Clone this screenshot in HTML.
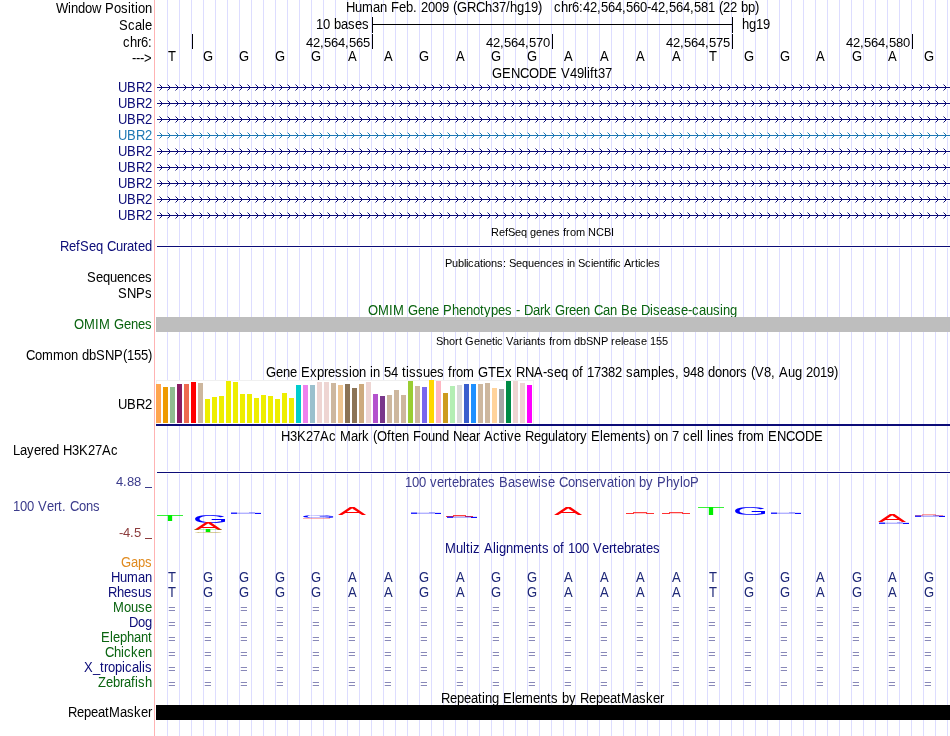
<!DOCTYPE html>
<html><head><meta charset="utf-8"><style>
html,body{margin:0;padding:0;background:#fff;}
svg{display:block;will-change:transform;font-family:"Liberation Sans",sans-serif;}
</style></head><body>
<svg width="950" height="736" viewBox="0 0 950 736" shape-rendering="crispEdges">
<defs><pattern id="arrN" x="157" y="0" width="8" height="7" patternUnits="userSpaceOnUse"><rect x="0" y="3" width="8" height="1" fill="#0C0C78"/><rect x="4" y="2" width="1" height="3" fill="#0C0C78"/><rect x="3" y="1" width="1" height="1" fill="#0C0C78"/><rect x="3" y="5" width="1" height="1" fill="#0C0C78"/><rect x="2" y="0" width="1" height="1" fill="#8585BB"/><rect x="2" y="6" width="1" height="1" fill="#8585BB"/></pattern><pattern id="arrT" x="157" y="0" width="8" height="7" patternUnits="userSpaceOnUse"><rect x="0" y="3" width="8" height="1" fill="#1E78B4"/><rect x="4" y="2" width="1" height="3" fill="#1E78B4"/><rect x="3" y="1" width="1" height="1" fill="#1E78B4"/><rect x="3" y="5" width="1" height="1" fill="#1E78B4"/><rect x="2" y="0" width="1" height="1" fill="#8FBBDA"/><rect x="2" y="6" width="1" height="1" fill="#8FBBDA"/></pattern></defs>
<rect x="0" y="0" width="950" height="736" fill="#fff"/>
<rect x="167" y="0" width="1" height="736" fill="#DDDDFF"/>
<rect x="179" y="0" width="1" height="736" fill="#DDDDFF"/>
<rect x="191" y="0" width="1" height="736" fill="#DDDDFF"/>
<rect x="203" y="0" width="1" height="736" fill="#DDDDFF"/>
<rect x="215" y="0" width="1" height="736" fill="#DDDDFF"/>
<rect x="227" y="0" width="1" height="736" fill="#DDDDFF"/>
<rect x="239" y="0" width="1" height="736" fill="#DDDDFF"/>
<rect x="251" y="0" width="1" height="736" fill="#DDDDFF"/>
<rect x="263" y="0" width="1" height="736" fill="#DDDDFF"/>
<rect x="275" y="0" width="1" height="736" fill="#DDDDFF"/>
<rect x="287" y="0" width="1" height="736" fill="#DDDDFF"/>
<rect x="299" y="0" width="1" height="736" fill="#DDDDFF"/>
<rect x="311" y="0" width="1" height="736" fill="#DDDDFF"/>
<rect x="323" y="0" width="1" height="736" fill="#DDDDFF"/>
<rect x="335" y="0" width="1" height="736" fill="#DDDDFF"/>
<rect x="347" y="0" width="1" height="736" fill="#DDDDFF"/>
<rect x="359" y="0" width="1" height="736" fill="#DDDDFF"/>
<rect x="371" y="0" width="1" height="736" fill="#DDDDFF"/>
<rect x="383" y="0" width="1" height="736" fill="#DDDDFF"/>
<rect x="395" y="0" width="1" height="736" fill="#DDDDFF"/>
<rect x="407" y="0" width="1" height="736" fill="#DDDDFF"/>
<rect x="419" y="0" width="1" height="736" fill="#DDDDFF"/>
<rect x="431" y="0" width="1" height="736" fill="#DDDDFF"/>
<rect x="443" y="0" width="1" height="736" fill="#DDDDFF"/>
<rect x="455" y="0" width="1" height="736" fill="#DDDDFF"/>
<rect x="467" y="0" width="1" height="736" fill="#DDDDFF"/>
<rect x="479" y="0" width="1" height="736" fill="#DDDDFF"/>
<rect x="491" y="0" width="1" height="736" fill="#DDDDFF"/>
<rect x="503" y="0" width="1" height="736" fill="#DDDDFF"/>
<rect x="515" y="0" width="1" height="736" fill="#DDDDFF"/>
<rect x="527" y="0" width="1" height="736" fill="#DDDDFF"/>
<rect x="539" y="0" width="1" height="736" fill="#DDDDFF"/>
<rect x="551" y="0" width="1" height="736" fill="#DDDDFF"/>
<rect x="563" y="0" width="1" height="736" fill="#DDDDFF"/>
<rect x="575" y="0" width="1" height="736" fill="#DDDDFF"/>
<rect x="587" y="0" width="1" height="736" fill="#DDDDFF"/>
<rect x="599" y="0" width="1" height="736" fill="#DDDDFF"/>
<rect x="611" y="0" width="1" height="736" fill="#DDDDFF"/>
<rect x="623" y="0" width="1" height="736" fill="#DDDDFF"/>
<rect x="635" y="0" width="1" height="736" fill="#DDDDFF"/>
<rect x="647" y="0" width="1" height="736" fill="#DDDDFF"/>
<rect x="659" y="0" width="1" height="736" fill="#DDDDFF"/>
<rect x="671" y="0" width="1" height="736" fill="#DDDDFF"/>
<rect x="683" y="0" width="1" height="736" fill="#DDDDFF"/>
<rect x="695" y="0" width="1" height="736" fill="#DDDDFF"/>
<rect x="707" y="0" width="1" height="736" fill="#DDDDFF"/>
<rect x="719" y="0" width="1" height="736" fill="#DDDDFF"/>
<rect x="731" y="0" width="1" height="736" fill="#DDDDFF"/>
<rect x="743" y="0" width="1" height="736" fill="#DDDDFF"/>
<rect x="755" y="0" width="1" height="736" fill="#DDDDFF"/>
<rect x="767" y="0" width="1" height="736" fill="#DDDDFF"/>
<rect x="779" y="0" width="1" height="736" fill="#DDDDFF"/>
<rect x="791" y="0" width="1" height="736" fill="#DDDDFF"/>
<rect x="803" y="0" width="1" height="736" fill="#DDDDFF"/>
<rect x="815" y="0" width="1" height="736" fill="#DDDDFF"/>
<rect x="827" y="0" width="1" height="736" fill="#DDDDFF"/>
<rect x="839" y="0" width="1" height="736" fill="#DDDDFF"/>
<rect x="851" y="0" width="1" height="736" fill="#DDDDFF"/>
<rect x="863" y="0" width="1" height="736" fill="#DDDDFF"/>
<rect x="875" y="0" width="1" height="736" fill="#DDDDFF"/>
<rect x="887" y="0" width="1" height="736" fill="#DDDDFF"/>
<rect x="899" y="0" width="1" height="736" fill="#DDDDFF"/>
<rect x="911" y="0" width="1" height="736" fill="#DDDDFF"/>
<rect x="923" y="0" width="1" height="736" fill="#DDDDFF"/>
<rect x="935" y="0" width="1" height="736" fill="#DDDDFF"/>
<rect x="947" y="0" width="1" height="736" fill="#DDDDFF"/>
<rect x="154" y="0" width="1" height="736" fill="#FFB3B3"/>
<text x="56 68 71 78 85 92 101 105 114 121 128 131 135 138 145" y="0" transform="translate(0,13) scale(1,1.06)" fill="#000" font-size="13">Window Position</text>
<text x="119 128 135 142 145" y="0" transform="translate(0,30) scale(1,1.06)" fill="#000" font-size="13">Scale</text>
<text x="123 130 137 141 148" y="0" transform="translate(0,47) scale(1,1.06)" fill="#000" font-size="13">chr6:</text>
<text x="132 136 140 144" y="0" transform="translate(0,63) scale(1,1.06)" fill="#000" font-size="13">---&gt;</text>
<text x="118 127 136 145" y="0" transform="translate(0,92) scale(1,1.06)" fill="#0C0C78" font-size="13">UBR2</text>
<text x="118 127 136 145" y="0" transform="translate(0,108) scale(1,1.06)" fill="#0C0C78" font-size="13">UBR2</text>
<text x="118 127 136 145" y="0" transform="translate(0,124) scale(1,1.06)" fill="#0C0C78" font-size="13">UBR2</text>
<text x="118 127 136 145" y="0" transform="translate(0,140) scale(1,1.06)" fill="#1E78B4" font-size="13">UBR2</text>
<text x="118 127 136 145" y="0" transform="translate(0,156) scale(1,1.06)" fill="#0C0C78" font-size="13">UBR2</text>
<text x="118 127 136 145" y="0" transform="translate(0,172) scale(1,1.06)" fill="#0C0C78" font-size="13">UBR2</text>
<text x="118 127 136 145" y="0" transform="translate(0,188) scale(1,1.06)" fill="#0C0C78" font-size="13">UBR2</text>
<text x="118 127 136 145" y="0" transform="translate(0,204) scale(1,1.06)" fill="#0C0C78" font-size="13">UBR2</text>
<text x="118 127 136 145" y="0" transform="translate(0,220) scale(1,1.06)" fill="#0C0C78" font-size="13">UBR2</text>
<text x="60 69 76 80 89 96 103 107 116 123 127 134 138 145" y="0" transform="translate(0,251) scale(1,1.06)" fill="#0C0C78" font-size="13">RefSeq Curated</text>
<text x="87 96 103 110 117 124 131 138 145" y="0" transform="translate(0,282) scale(1,1.06)" fill="#000" font-size="13">Sequences</text>
<text x="118 127 136 145" y="0" transform="translate(0,298) scale(1,1.06)" fill="#000" font-size="13">SNPs</text>
<text x="74 84 95 99 110 114 124 131 138 145" y="0" transform="translate(0,329) scale(1,1.06)" fill="#0A6410" font-size="13">OMIM Genes</text>
<text x="26 35 42 53 64 71 78 82 89 96 105 114 123 127 134 141 148" y="0" transform="translate(0,360) scale(1,1.06)" fill="#000" font-size="13">Common dbSNP(155)</text>
<text x="118 127 136 145" y="0" transform="translate(0,409) scale(1,1.06)" fill="#000" font-size="13">UBR2</text>
<text x="116 123 127 134 141" y="486" fill="#3C3C8C" font-size="13">4.88 </text>
<text x="119 123 130 134 141" y="537" fill="#8C3C3C" font-size="13">-4.5 </text>
<text x="121 131 138 145" y="0" transform="translate(0,567) scale(1,1.06)" fill="#E08A1E" font-size="13">Gaps</text>
<text x="111 120 127 138 145" y="0" transform="translate(0,582) scale(1,1.06)" fill="#0C0C78" font-size="13">Human</text>
<text x="108 117 124 131 138 145" y="0" transform="translate(0,597) scale(1,1.06)" fill="#0C0C78" font-size="13">Rhesus</text>
<text x="113 124 131 138 145" y="0" transform="translate(0,612) scale(1,1.06)" fill="#0A6410" font-size="13">Mouse</text>
<text x="129 138 145" y="0" transform="translate(0,627) scale(1,1.06)" fill="#0C0C78" font-size="13">Dog</text>
<text x="101 110 113 120 127 134 141 148" y="0" transform="translate(0,642) scale(1,1.06)" fill="#0A6410" font-size="13">Elephant</text>
<text x="105 114 121 124 131 138 145" y="0" transform="translate(0,657) scale(1,1.06)" fill="#0A6410" font-size="13">Chicken</text>
<text x="84 93 100 104 108 115 122 125 132 139 142 145" y="0" transform="translate(0,672) scale(1,1.06)" fill="#0C0C78" font-size="13">X_tropicalis</text>
<text x="98 106 113 120 124 131 135 138 145" y="0" transform="translate(0,687) scale(1,1.06)" fill="#0A6410" font-size="13">Zebrafish</text>
<text x="68 77 84 91 98 105 109 120 127 134 141 148" y="0" transform="translate(0,717) scale(1,1.06)" fill="#000" font-size="13">RepeatMasker</text>
<rect x="145" y="487" width="7" height="1" fill="#3C3C8C"/>
<rect x="145" y="538" width="7" height="1" fill="#8C3C3C"/>
<text x="13 20 27 34 41 45 52 59 63 72 79 88 95 102 111" y="0" transform="translate(0,455) scale(1,1.06)" fill="#000" font-size="13">Layered H3K27Ac</text>
<text x="13 20 27 34 38 47 54 58 62 66 70 79 86 93" y="0" transform="translate(0,511) scale(1,1.06)" fill="#3C3C8C" font-size="13">100 Vert. Cons</text>
<text x="346 355 362 373 380 387 391 399 406 413 417 421 428 435 442 449 453 457 467 476 485 492 499 506 510 517 524 531 538 542 546 550 554 561 568 572 579 583 590 597 601 608 615 622 626 633 640 647 651 658 665 669 676 683 690 694 701 708 715 719 723 730 737 741 748 755" y="0" transform="translate(0,12) scale(1,1.06)" fill="#000" font-size="13">Human Feb. 2009 (GRCh37/hg19)   chr6:42,564,560-42,564,581 (22 bp)</text>
<text x="316 323 330 334 341 348 355 362" y="0" transform="translate(0,29) scale(1,1.06)" fill="#000" font-size="13">10 bases</text>
<rect x="372" y="17" width="1" height="16" fill="#000"/>
<rect x="732" y="17" width="1" height="16" fill="#000"/>
<rect x="372" y="24" width="361" height="1" fill="#000"/>
<text x="742 749 756 763" y="0" transform="translate(0,29) scale(1,1.06)" fill="#000" font-size="13">hg19</text>
<rect x="192" y="34" width="1" height="15" fill="#000"/>
<rect x="372" y="34" width="1" height="15" fill="#000"/>
<text x="306 313 320 324 331 338 345 349 356 363" y="47" fill="#000" font-size="13">42,564,565</text>
<rect x="552" y="34" width="1" height="15" fill="#000"/>
<text x="486 493 500 504 511 518 525 529 536 543" y="47" fill="#000" font-size="13">42,564,570</text>
<rect x="732" y="34" width="1" height="15" fill="#000"/>
<text x="666 673 680 684 691 698 705 709 716 723" y="47" fill="#000" font-size="13">42,564,575</text>
<rect x="912" y="34" width="1" height="15" fill="#000"/>
<text x="846 853 860 864 871 878 885 889 896 903" y="47" fill="#000" font-size="13">42,564,580</text>
<text x="168" y="0" transform="translate(0,61) scale(1,1.06)" fill="#000" font-size="13">T</text>
<text x="203" y="0" transform="translate(0,61) scale(1,1.06)" fill="#000" font-size="13">G</text>
<text x="239" y="0" transform="translate(0,61) scale(1,1.06)" fill="#000" font-size="13">G</text>
<text x="275" y="0" transform="translate(0,61) scale(1,1.06)" fill="#000" font-size="13">G</text>
<text x="311" y="0" transform="translate(0,61) scale(1,1.06)" fill="#000" font-size="13">G</text>
<text x="348" y="0" transform="translate(0,61) scale(1,1.06)" fill="#000" font-size="13">A</text>
<text x="384" y="0" transform="translate(0,61) scale(1,1.06)" fill="#000" font-size="13">A</text>
<text x="419" y="0" transform="translate(0,61) scale(1,1.06)" fill="#000" font-size="13">G</text>
<text x="456" y="0" transform="translate(0,61) scale(1,1.06)" fill="#000" font-size="13">A</text>
<text x="491" y="0" transform="translate(0,61) scale(1,1.06)" fill="#000" font-size="13">G</text>
<text x="527" y="0" transform="translate(0,61) scale(1,1.06)" fill="#000" font-size="13">G</text>
<text x="564" y="0" transform="translate(0,61) scale(1,1.06)" fill="#000" font-size="13">A</text>
<text x="600" y="0" transform="translate(0,61) scale(1,1.06)" fill="#000" font-size="13">A</text>
<text x="636" y="0" transform="translate(0,61) scale(1,1.06)" fill="#000" font-size="13">A</text>
<text x="672" y="0" transform="translate(0,61) scale(1,1.06)" fill="#000" font-size="13">A</text>
<text x="709" y="0" transform="translate(0,61) scale(1,1.06)" fill="#000" font-size="13">T</text>
<text x="744" y="0" transform="translate(0,61) scale(1,1.06)" fill="#000" font-size="13">G</text>
<text x="780" y="0" transform="translate(0,61) scale(1,1.06)" fill="#000" font-size="13">G</text>
<text x="816" y="0" transform="translate(0,61) scale(1,1.06)" fill="#000" font-size="13">A</text>
<text x="852" y="0" transform="translate(0,61) scale(1,1.06)" fill="#000" font-size="13">G</text>
<text x="888" y="0" transform="translate(0,61) scale(1,1.06)" fill="#000" font-size="13">A</text>
<text x="924" y="0" transform="translate(0,61) scale(1,1.06)" fill="#000" font-size="13">G</text>
<text x="492 502 511 520 529 539 548 557 561 570 577 584 587 590 594 598 605" y="0" transform="translate(0,78) scale(1,1.06)" fill="#000" font-size="13">GENCODE V49lift37</text>
<rect x="157" y="86" width="793" height="3" fill="#fff"/>
<rect x="157" y="0" width="793" height="7" fill="url(#arrN)" transform="translate(0,84)"/>
<rect x="157" y="102" width="793" height="3" fill="#fff"/>
<rect x="157" y="0" width="793" height="7" fill="url(#arrN)" transform="translate(0,100)"/>
<rect x="157" y="118" width="793" height="3" fill="#fff"/>
<rect x="157" y="0" width="793" height="7" fill="url(#arrN)" transform="translate(0,116)"/>
<rect x="157" y="134" width="793" height="3" fill="#fff"/>
<rect x="157" y="0" width="793" height="7" fill="url(#arrT)" transform="translate(0,132)"/>
<rect x="157" y="150" width="793" height="3" fill="#fff"/>
<rect x="157" y="0" width="793" height="7" fill="url(#arrN)" transform="translate(0,148)"/>
<rect x="157" y="166" width="793" height="3" fill="#fff"/>
<rect x="157" y="0" width="793" height="7" fill="url(#arrN)" transform="translate(0,164)"/>
<rect x="157" y="182" width="793" height="3" fill="#fff"/>
<rect x="157" y="0" width="793" height="7" fill="url(#arrN)" transform="translate(0,180)"/>
<rect x="157" y="198" width="793" height="3" fill="#fff"/>
<rect x="157" y="0" width="793" height="7" fill="url(#arrN)" transform="translate(0,196)"/>
<rect x="157" y="214" width="793" height="3" fill="#fff"/>
<rect x="157" y="0" width="793" height="7" fill="url(#arrN)" transform="translate(0,212)"/>
<text x="491 499 505 508 515 521 527 530 536 542 548 554 560 563 566 570 576 585 588 596 604 611" y="0" transform="translate(0,236) scale(1,1.06)" fill="#000" font-size="11">RefSeq genes from NCBI</text>
<rect x="157" y="245" width="793" height="3" fill="#fff"/>
<rect x="157" y="246" width="793" height="1" fill="#0C0C78"/>
<text x="445 452 458 464 466 468 474 480 483 485 491 497 503 506 509 516 522 528 534 540 546 552 558 564 567 569 575 578 585 591 593 599 605 608 610 613 615 621 624 631 635 638 640 646 648 654" y="0" transform="translate(0,267) scale(1,1.06)" fill="#000" font-size="11">Publications: Sequences in Scientific Articles</text>
<text x="368 378 389 393 404 408 418 425 432 439 443 452 459 466 473 480 484 491 498 505 512 516 520 524 533 540 544 551 555 565 569 576 583 590 594 603 610 617 621 630 637 641 650 653 660 667 674 681 688 692 699 706 713 720 723 730" y="0" transform="translate(0,315) scale(1,1.06)" fill="#0A6410" font-size="13">OMIM Gene Phenotypes - Dark Green Can Be Disease-causing</text>
<rect x="156" y="317" width="794" height="15" fill="#BEBEBE"/>
<text x="436 443 449 455 459 462 465 474 480 486 492 495 497 503 506 513 519 523 525 531 537 540 546 549 552 556 562 571 574 580 586 593 601 608 611 615 621 623 629 635 641 647 650 656 662" y="0" transform="translate(0,345) scale(1,1.06)" fill="#000" font-size="11">Short Genetic Variants from dbSNP release 155</text>
<text x="266 276 283 290 297 301 310 317 324 328 335 342 349 352 359 366 370 373 380 384 391 398 402 406 409 416 423 430 437 444 448 452 456 463 474 478 488 496 505 512 516 525 534 543 547 554 561 568 572 579 583 587 594 601 608 615 622 626 633 640 651 658 661 668 675 679 683 690 697 704 708 715 722 729 736 740 747 751 755 764 771 775 779 788 795 802 806 813 820 827 834" y="0" transform="translate(0,377) scale(1,1.06)" fill="#000" font-size="13">Gene Expression in 54 tissues from GTEx RNA-seq of 17382 samples, 948 donors (V8, Aug 2019)</text>
<rect x="156" y="380" width="378" height="44" fill="#fff"/>
<rect x="156" y="380" width="378" height="1" fill="#F0F0F0"/>
<rect x="156" y="380" width="1" height="44" fill="#F0F0F0"/>
<rect x="533" y="380" width="1" height="44" fill="#F0F0F0"/>
<rect x="156" y="384" width="5" height="39" fill="#FFA54F"/>
<rect x="163" y="387" width="5" height="36" fill="#EE9A00"/>
<rect x="170" y="387" width="5" height="36" fill="#8FBC8F"/>
<rect x="177" y="384" width="5" height="39" fill="#8B1C62"/>
<rect x="184" y="384" width="5" height="39" fill="#EE6A50"/>
<rect x="191" y="382" width="5" height="41" fill="#FF0000"/>
<rect x="198" y="383" width="5" height="40" fill="#CDB79E"/>
<rect x="205" y="399" width="5" height="24" fill="#EEEE00"/>
<rect x="212" y="397" width="5" height="26" fill="#EEEE00"/>
<rect x="219" y="396" width="5" height="27" fill="#EEEE00"/>
<rect x="226" y="381" width="5" height="42" fill="#EEEE00"/>
<rect x="233" y="382" width="5" height="41" fill="#EEEE00"/>
<rect x="240" y="394" width="5" height="29" fill="#EEEE00"/>
<rect x="247" y="394" width="5" height="29" fill="#EEEE00"/>
<rect x="254" y="398" width="5" height="25" fill="#EEEE00"/>
<rect x="261" y="395" width="5" height="28" fill="#EEEE00"/>
<rect x="268" y="396" width="5" height="27" fill="#EEEE00"/>
<rect x="275" y="399" width="5" height="24" fill="#EEEE00"/>
<rect x="282" y="393" width="5" height="30" fill="#EEEE00"/>
<rect x="289" y="398" width="5" height="25" fill="#EEEE00"/>
<rect x="296" y="385" width="5" height="38" fill="#00CDCD"/>
<rect x="303" y="385" width="5" height="38" fill="#EE82EE"/>
<rect x="310" y="385" width="5" height="38" fill="#9AC0CD"/>
<rect x="317" y="382" width="5" height="41" fill="#EED5D2"/>
<rect x="324" y="382" width="5" height="41" fill="#EED5D2"/>
<rect x="331" y="383" width="5" height="40" fill="#CDB79E"/>
<rect x="338" y="385" width="5" height="38" fill="#EEC591"/>
<rect x="345" y="384" width="5" height="39" fill="#8B7355"/>
<rect x="352" y="388" width="5" height="35" fill="#8B7355"/>
<rect x="359" y="384" width="5" height="39" fill="#CDAA7D"/>
<rect x="366" y="382" width="5" height="41" fill="#EED5D2"/>
<rect x="373" y="394" width="5" height="29" fill="#B452CD"/>
<rect x="380" y="396" width="5" height="27" fill="#7A378B"/>
<rect x="387" y="395" width="5" height="28" fill="#CDB79E"/>
<rect x="394" y="390" width="5" height="33" fill="#CDB79E"/>
<rect x="401" y="395" width="5" height="28" fill="#CDB79E"/>
<rect x="408" y="381" width="5" height="42" fill="#9ACD32"/>
<rect x="415" y="386" width="5" height="37" fill="#CDB79E"/>
<rect x="422" y="387" width="5" height="36" fill="#7A67EE"/>
<rect x="429" y="380" width="5" height="43" fill="#FFD700"/>
<rect x="436" y="381" width="5" height="42" fill="#FFB6C1"/>
<rect x="443" y="393" width="5" height="30" fill="#CD9B1D"/>
<rect x="450" y="386" width="5" height="37" fill="#B4EEB4"/>
<rect x="457" y="385" width="5" height="38" fill="#D9D9D9"/>
<rect x="464" y="384" width="5" height="39" fill="#3A5FCD"/>
<rect x="471" y="384" width="5" height="39" fill="#1E90FF"/>
<rect x="478" y="384" width="5" height="39" fill="#CDB79E"/>
<rect x="485" y="383" width="5" height="40" fill="#CDB79E"/>
<rect x="492" y="388" width="5" height="35" fill="#FFD39B"/>
<rect x="499" y="389" width="5" height="34" fill="#A6A6A6"/>
<rect x="506" y="381" width="5" height="42" fill="#008B45"/>
<rect x="513" y="381" width="5" height="42" fill="#EED5D2"/>
<rect x="520" y="383" width="5" height="40" fill="#EED5D2"/>
<rect x="527" y="385" width="5" height="38" fill="#FF00FF"/>
<rect x="156" y="424" width="794" height="2" fill="#0C0C78"/>
<text x="281 290 297 306 313 320 329 336 340 351 358 362 369 373 377 387 391 395 402 409 413 421 428 435 442 449 453 462 469 476 480 484 493 500 504 507 514 521 525 534 541 548 555 558 565 569 576 580 587 591 600 603 610 621 628 635 639 646 650 654 661 668 672 679 683 690 697 700 703 707 710 713 720 727 734 738 742 746 753 764 768 777 786 795 805 814" y="0" transform="translate(0,441) scale(1,1.06)" fill="#000" font-size="13">H3K27Ac Mark (Often Found Near Active Regulatory Elements) on 7 cell lines from ENCODE</text>
<rect x="157" y="471" width="793" height="3" fill="#fff"/>
<rect x="157" y="472" width="793" height="1" fill="#0C0C78"/>
<text x="405 412 419 426 430 437 444 448 452 459 466 470 477 481 488 495 499 508 515 522 529 538 541 548 555 559 568 575 582 589 596 600 607 614 618 621 628 635 639 646 653 657 666 673 680 683 690" y="0" transform="translate(0,487) scale(1,1.06)" fill="#3C3C8C" font-size="13">100 vertebrates Basewise Conservation by PhyloP</text>
<text transform="translate(155.967,521.000) scale(0.4598,0.0872)" font-size="100" fill="#00EE00" shape-rendering="auto">T</text>
<text transform="translate(192.689,522.890) scale(0.4595,0.1130)" font-size="100" fill="#0000FF" shape-rendering="auto">G</text>
<text transform="translate(193.918,530.000) scale(0.4223,0.1017)" font-size="100" fill="#FF0000" shape-rendering="auto">A</text>
<text transform="translate(192.888,532.000) scale(0.4952,0.0291)" font-size="100" fill="#00EE00" shape-rendering="auto">T</text>
<text transform="translate(192.835,532.986) scale(0.4263,0.0141)" font-size="100" fill="#B4A03C" shape-rendering="auto">C</text>
<text transform="translate(300.689,517.959) scale(0.4595,0.0424)" font-size="100" fill="#0000FF" shape-rendering="auto">G</text>
<text transform="translate(337.918,515.000) scale(0.4223,0.1163)" font-size="100" fill="#FF0000" shape-rendering="auto">A</text>
<text transform="translate(553.918,515.000) scale(0.4223,0.1163)" font-size="100" fill="#FF0000" shape-rendering="auto">A</text>
<text transform="translate(696.967,515.000) scale(0.4598,0.1163)" font-size="100" fill="#00EE00" shape-rendering="auto">T</text>
<text transform="translate(732.689,514.890) scale(0.4595,0.1130)" font-size="100" fill="#0000FF" shape-rendering="auto">G</text>
<text transform="translate(877.918,522.000) scale(0.4223,0.1017)" font-size="100" fill="#FF0000" shape-rendering="auto">A</text>
<rect x="231" y="513" width="30" height="1" fill="#0000FF" fill-opacity="0.3"/>
<rect x="231" y="512" width="30" height="1" fill="#0000FF" fill-opacity="0.12"/>
<rect x="231" y="513" width="6" height="1" fill="#0000FF" fill-opacity="0.75"/>
<rect x="231" y="512" width="6" height="1" fill="#0000FF" fill-opacity="0.35"/>
<rect x="255" y="513" width="6" height="1" fill="#0000FF" fill-opacity="0.95"/>
<rect x="249" y="512" width="6" height="1" fill="#0000FF" fill-opacity="0.25"/>
<rect x="411" y="513" width="30" height="1" fill="#0000FF" fill-opacity="0.3"/>
<rect x="411" y="512" width="30" height="1" fill="#0000FF" fill-opacity="0.12"/>
<rect x="411" y="513" width="6" height="1" fill="#0000FF" fill-opacity="0.75"/>
<rect x="411" y="512" width="6" height="1" fill="#0000FF" fill-opacity="0.35"/>
<rect x="435" y="513" width="6" height="1" fill="#0000FF" fill-opacity="0.95"/>
<rect x="429" y="512" width="6" height="1" fill="#0000FF" fill-opacity="0.25"/>
<rect x="771" y="513" width="30" height="1" fill="#0000FF" fill-opacity="0.3"/>
<rect x="771" y="512" width="30" height="1" fill="#0000FF" fill-opacity="0.12"/>
<rect x="771" y="513" width="6" height="1" fill="#0000FF" fill-opacity="0.75"/>
<rect x="771" y="512" width="6" height="1" fill="#0000FF" fill-opacity="0.35"/>
<rect x="795" y="513" width="6" height="1" fill="#0000FF" fill-opacity="0.95"/>
<rect x="789" y="512" width="6" height="1" fill="#0000FF" fill-opacity="0.25"/>
<rect x="626" y="513" width="8" height="1" fill="#FF0000" fill-opacity="0.8"/>
<rect x="646" y="513" width="8" height="1" fill="#FF0000" fill-opacity="0.8"/>
<rect x="633" y="512" width="14" height="1" fill="#FF0000" fill-opacity="0.75"/>
<rect x="634" y="513" width="12" height="1" fill="#FF0000" fill-opacity="0.2"/>
<rect x="662" y="513" width="8" height="1" fill="#FF0000" fill-opacity="0.8"/>
<rect x="682" y="513" width="8" height="1" fill="#FF0000" fill-opacity="0.8"/>
<rect x="669" y="512" width="14" height="1" fill="#FF0000" fill-opacity="0.75"/>
<rect x="670" y="513" width="12" height="1" fill="#FF0000" fill-opacity="0.2"/>
<rect x="446" y="516" width="8" height="1" fill="#FF0000" fill-opacity="0.8"/>
<rect x="465" y="516" width="8" height="1" fill="#FF0000" fill-opacity="0.8"/>
<rect x="453" y="515" width="13" height="1" fill="#FF0000" fill-opacity="0.75"/>
<rect x="454" y="516" width="11" height="1" fill="#FF0000" fill-opacity="0.2"/>
<rect x="447" y="517" width="30" height="1" fill="#0000FF" fill-opacity="0.3"/>
<rect x="447" y="516" width="30" height="1" fill="#0000FF" fill-opacity="0.12"/>
<rect x="447" y="517" width="6" height="1" fill="#0000FF" fill-opacity="0.75"/>
<rect x="447" y="516" width="6" height="1" fill="#0000FF" fill-opacity="0.35"/>
<rect x="471" y="517" width="6" height="1" fill="#0000FF" fill-opacity="0.95"/>
<rect x="465" y="516" width="6" height="1" fill="#0000FF" fill-opacity="0.25"/>
<rect x="879" y="523" width="30" height="1" fill="#0000FF" fill-opacity="0.3"/>
<rect x="879" y="522" width="30" height="1" fill="#0000FF" fill-opacity="0.12"/>
<rect x="879" y="523" width="6" height="1" fill="#0000FF" fill-opacity="0.75"/>
<rect x="879" y="522" width="6" height="1" fill="#0000FF" fill-opacity="0.35"/>
<rect x="903" y="523" width="6" height="1" fill="#0000FF" fill-opacity="0.95"/>
<rect x="897" y="522" width="6" height="1" fill="#0000FF" fill-opacity="0.25"/>
<rect x="915" y="515" width="8" height="1" fill="#FF0000" fill-opacity="0.4"/>
<rect x="935" y="515" width="8" height="1" fill="#FF0000" fill-opacity="0.4"/>
<rect x="922" y="514" width="14" height="1" fill="#FF0000" fill-opacity="0.375"/>
<rect x="923" y="515" width="12" height="1" fill="#FF0000" fill-opacity="0.1"/>
<rect x="915" y="516" width="30" height="1" fill="#0000FF" fill-opacity="0.3"/>
<rect x="915" y="515" width="30" height="1" fill="#0000FF" fill-opacity="0.12"/>
<rect x="915" y="516" width="6" height="1" fill="#0000FF" fill-opacity="0.75"/>
<rect x="915" y="515" width="6" height="1" fill="#0000FF" fill-opacity="0.35"/>
<rect x="939" y="516" width="6" height="1" fill="#0000FF" fill-opacity="0.95"/>
<rect x="933" y="515" width="6" height="1" fill="#0000FF" fill-opacity="0.25"/>
<rect x="303" y="518" width="27" height="1" fill="#FF0000" fill-opacity="0.3"/>
<text x="445 456 463 466 470 473 480 484 493 496 499 506 513 524 531 538 542 549 553 560 564 568 575 582 589 593 602 609 613 617 624 631 635 642 646 653" y="0" transform="translate(0,553) scale(1,1.06)" fill="#0C0C78" font-size="13">Multiz Alignments of 100 Vertebrates</text>
<text x="168" y="0" transform="translate(0,582) scale(1,1.06)" fill="#1E2878" font-size="13">T</text>
<text x="203" y="0" transform="translate(0,582) scale(1,1.06)" fill="#1E2878" font-size="13">G</text>
<text x="239" y="0" transform="translate(0,582) scale(1,1.06)" fill="#1E2878" font-size="13">G</text>
<text x="275" y="0" transform="translate(0,582) scale(1,1.06)" fill="#1E2878" font-size="13">G</text>
<text x="311" y="0" transform="translate(0,582) scale(1,1.06)" fill="#1E2878" font-size="13">G</text>
<text x="348" y="0" transform="translate(0,582) scale(1,1.06)" fill="#1E2878" font-size="13">A</text>
<text x="384" y="0" transform="translate(0,582) scale(1,1.06)" fill="#1E2878" font-size="13">A</text>
<text x="419" y="0" transform="translate(0,582) scale(1,1.06)" fill="#1E2878" font-size="13">G</text>
<text x="456" y="0" transform="translate(0,582) scale(1,1.06)" fill="#1E2878" font-size="13">A</text>
<text x="491" y="0" transform="translate(0,582) scale(1,1.06)" fill="#1E2878" font-size="13">G</text>
<text x="527" y="0" transform="translate(0,582) scale(1,1.06)" fill="#1E2878" font-size="13">G</text>
<text x="564" y="0" transform="translate(0,582) scale(1,1.06)" fill="#1E2878" font-size="13">A</text>
<text x="600" y="0" transform="translate(0,582) scale(1,1.06)" fill="#1E2878" font-size="13">A</text>
<text x="636" y="0" transform="translate(0,582) scale(1,1.06)" fill="#1E2878" font-size="13">A</text>
<text x="672" y="0" transform="translate(0,582) scale(1,1.06)" fill="#1E2878" font-size="13">A</text>
<text x="709" y="0" transform="translate(0,582) scale(1,1.06)" fill="#1E2878" font-size="13">T</text>
<text x="744" y="0" transform="translate(0,582) scale(1,1.06)" fill="#1E2878" font-size="13">G</text>
<text x="780" y="0" transform="translate(0,582) scale(1,1.06)" fill="#1E2878" font-size="13">G</text>
<text x="816" y="0" transform="translate(0,582) scale(1,1.06)" fill="#1E2878" font-size="13">A</text>
<text x="852" y="0" transform="translate(0,582) scale(1,1.06)" fill="#1E2878" font-size="13">G</text>
<text x="888" y="0" transform="translate(0,582) scale(1,1.06)" fill="#1E2878" font-size="13">A</text>
<text x="924" y="0" transform="translate(0,582) scale(1,1.06)" fill="#1E2878" font-size="13">G</text>
<text x="168" y="0" transform="translate(0,597) scale(1,1.06)" fill="#1E2878" font-size="13">T</text>
<text x="203" y="0" transform="translate(0,597) scale(1,1.06)" fill="#1E2878" font-size="13">G</text>
<text x="239" y="0" transform="translate(0,597) scale(1,1.06)" fill="#1E2878" font-size="13">G</text>
<text x="275" y="0" transform="translate(0,597) scale(1,1.06)" fill="#1E2878" font-size="13">G</text>
<text x="311" y="0" transform="translate(0,597) scale(1,1.06)" fill="#1E2878" font-size="13">G</text>
<text x="348" y="0" transform="translate(0,597) scale(1,1.06)" fill="#1E2878" font-size="13">A</text>
<text x="384" y="0" transform="translate(0,597) scale(1,1.06)" fill="#1E2878" font-size="13">A</text>
<text x="419" y="0" transform="translate(0,597) scale(1,1.06)" fill="#1E2878" font-size="13">G</text>
<text x="456" y="0" transform="translate(0,597) scale(1,1.06)" fill="#1E2878" font-size="13">A</text>
<text x="491" y="0" transform="translate(0,597) scale(1,1.06)" fill="#1E2878" font-size="13">G</text>
<text x="527" y="0" transform="translate(0,597) scale(1,1.06)" fill="#1E2878" font-size="13">G</text>
<text x="564" y="0" transform="translate(0,597) scale(1,1.06)" fill="#1E2878" font-size="13">A</text>
<text x="600" y="0" transform="translate(0,597) scale(1,1.06)" fill="#1E2878" font-size="13">A</text>
<text x="636" y="0" transform="translate(0,597) scale(1,1.06)" fill="#1E2878" font-size="13">A</text>
<text x="672" y="0" transform="translate(0,597) scale(1,1.06)" fill="#1E2878" font-size="13">A</text>
<text x="709" y="0" transform="translate(0,597) scale(1,1.06)" fill="#1E2878" font-size="13">T</text>
<text x="744" y="0" transform="translate(0,597) scale(1,1.06)" fill="#1E2878" font-size="13">G</text>
<text x="780" y="0" transform="translate(0,597) scale(1,1.06)" fill="#1E2878" font-size="13">G</text>
<text x="816" y="0" transform="translate(0,597) scale(1,1.06)" fill="#1E2878" font-size="13">A</text>
<text x="852" y="0" transform="translate(0,597) scale(1,1.06)" fill="#1E2878" font-size="13">G</text>
<text x="888" y="0" transform="translate(0,597) scale(1,1.06)" fill="#1E2878" font-size="13">A</text>
<text x="924" y="0" transform="translate(0,597) scale(1,1.06)" fill="#1E2878" font-size="13">G</text>
<rect x="169" y="607" width="6" height="1" fill="#8888B8"/>
<rect x="169" y="610" width="6" height="1" fill="#8888B8"/>
<rect x="168" y="607" width="1" height="1" fill="#E4E4EE"/>
<rect x="168" y="610" width="1" height="1" fill="#E4E4EE"/>
<rect x="205" y="607" width="6" height="1" fill="#8888B8"/>
<rect x="205" y="610" width="6" height="1" fill="#8888B8"/>
<rect x="204" y="607" width="1" height="1" fill="#E4E4EE"/>
<rect x="204" y="610" width="1" height="1" fill="#E4E4EE"/>
<rect x="241" y="607" width="6" height="1" fill="#8888B8"/>
<rect x="241" y="610" width="6" height="1" fill="#8888B8"/>
<rect x="240" y="607" width="1" height="1" fill="#E4E4EE"/>
<rect x="240" y="610" width="1" height="1" fill="#E4E4EE"/>
<rect x="277" y="607" width="6" height="1" fill="#8888B8"/>
<rect x="277" y="610" width="6" height="1" fill="#8888B8"/>
<rect x="276" y="607" width="1" height="1" fill="#E4E4EE"/>
<rect x="276" y="610" width="1" height="1" fill="#E4E4EE"/>
<rect x="313" y="607" width="6" height="1" fill="#8888B8"/>
<rect x="313" y="610" width="6" height="1" fill="#8888B8"/>
<rect x="312" y="607" width="1" height="1" fill="#E4E4EE"/>
<rect x="312" y="610" width="1" height="1" fill="#E4E4EE"/>
<rect x="349" y="607" width="6" height="1" fill="#8888B8"/>
<rect x="349" y="610" width="6" height="1" fill="#8888B8"/>
<rect x="348" y="607" width="1" height="1" fill="#E4E4EE"/>
<rect x="348" y="610" width="1" height="1" fill="#E4E4EE"/>
<rect x="385" y="607" width="6" height="1" fill="#8888B8"/>
<rect x="385" y="610" width="6" height="1" fill="#8888B8"/>
<rect x="384" y="607" width="1" height="1" fill="#E4E4EE"/>
<rect x="384" y="610" width="1" height="1" fill="#E4E4EE"/>
<rect x="421" y="607" width="6" height="1" fill="#8888B8"/>
<rect x="421" y="610" width="6" height="1" fill="#8888B8"/>
<rect x="420" y="607" width="1" height="1" fill="#E4E4EE"/>
<rect x="420" y="610" width="1" height="1" fill="#E4E4EE"/>
<rect x="457" y="607" width="6" height="1" fill="#8888B8"/>
<rect x="457" y="610" width="6" height="1" fill="#8888B8"/>
<rect x="456" y="607" width="1" height="1" fill="#E4E4EE"/>
<rect x="456" y="610" width="1" height="1" fill="#E4E4EE"/>
<rect x="493" y="607" width="6" height="1" fill="#8888B8"/>
<rect x="493" y="610" width="6" height="1" fill="#8888B8"/>
<rect x="492" y="607" width="1" height="1" fill="#E4E4EE"/>
<rect x="492" y="610" width="1" height="1" fill="#E4E4EE"/>
<rect x="529" y="607" width="6" height="1" fill="#8888B8"/>
<rect x="529" y="610" width="6" height="1" fill="#8888B8"/>
<rect x="528" y="607" width="1" height="1" fill="#E4E4EE"/>
<rect x="528" y="610" width="1" height="1" fill="#E4E4EE"/>
<rect x="565" y="607" width="6" height="1" fill="#8888B8"/>
<rect x="565" y="610" width="6" height="1" fill="#8888B8"/>
<rect x="564" y="607" width="1" height="1" fill="#E4E4EE"/>
<rect x="564" y="610" width="1" height="1" fill="#E4E4EE"/>
<rect x="601" y="607" width="6" height="1" fill="#8888B8"/>
<rect x="601" y="610" width="6" height="1" fill="#8888B8"/>
<rect x="600" y="607" width="1" height="1" fill="#E4E4EE"/>
<rect x="600" y="610" width="1" height="1" fill="#E4E4EE"/>
<rect x="637" y="607" width="6" height="1" fill="#8888B8"/>
<rect x="637" y="610" width="6" height="1" fill="#8888B8"/>
<rect x="636" y="607" width="1" height="1" fill="#E4E4EE"/>
<rect x="636" y="610" width="1" height="1" fill="#E4E4EE"/>
<rect x="673" y="607" width="6" height="1" fill="#8888B8"/>
<rect x="673" y="610" width="6" height="1" fill="#8888B8"/>
<rect x="672" y="607" width="1" height="1" fill="#E4E4EE"/>
<rect x="672" y="610" width="1" height="1" fill="#E4E4EE"/>
<rect x="709" y="607" width="6" height="1" fill="#8888B8"/>
<rect x="709" y="610" width="6" height="1" fill="#8888B8"/>
<rect x="708" y="607" width="1" height="1" fill="#E4E4EE"/>
<rect x="708" y="610" width="1" height="1" fill="#E4E4EE"/>
<rect x="745" y="607" width="6" height="1" fill="#8888B8"/>
<rect x="745" y="610" width="6" height="1" fill="#8888B8"/>
<rect x="744" y="607" width="1" height="1" fill="#E4E4EE"/>
<rect x="744" y="610" width="1" height="1" fill="#E4E4EE"/>
<rect x="781" y="607" width="6" height="1" fill="#8888B8"/>
<rect x="781" y="610" width="6" height="1" fill="#8888B8"/>
<rect x="780" y="607" width="1" height="1" fill="#E4E4EE"/>
<rect x="780" y="610" width="1" height="1" fill="#E4E4EE"/>
<rect x="817" y="607" width="6" height="1" fill="#8888B8"/>
<rect x="817" y="610" width="6" height="1" fill="#8888B8"/>
<rect x="816" y="607" width="1" height="1" fill="#E4E4EE"/>
<rect x="816" y="610" width="1" height="1" fill="#E4E4EE"/>
<rect x="853" y="607" width="6" height="1" fill="#8888B8"/>
<rect x="853" y="610" width="6" height="1" fill="#8888B8"/>
<rect x="852" y="607" width="1" height="1" fill="#E4E4EE"/>
<rect x="852" y="610" width="1" height="1" fill="#E4E4EE"/>
<rect x="889" y="607" width="6" height="1" fill="#8888B8"/>
<rect x="889" y="610" width="6" height="1" fill="#8888B8"/>
<rect x="888" y="607" width="1" height="1" fill="#E4E4EE"/>
<rect x="888" y="610" width="1" height="1" fill="#E4E4EE"/>
<rect x="925" y="607" width="6" height="1" fill="#8888B8"/>
<rect x="925" y="610" width="6" height="1" fill="#8888B8"/>
<rect x="924" y="607" width="1" height="1" fill="#E4E4EE"/>
<rect x="924" y="610" width="1" height="1" fill="#E4E4EE"/>
<rect x="169" y="622" width="6" height="1" fill="#8888B8"/>
<rect x="169" y="625" width="6" height="1" fill="#8888B8"/>
<rect x="168" y="622" width="1" height="1" fill="#E4E4EE"/>
<rect x="168" y="625" width="1" height="1" fill="#E4E4EE"/>
<rect x="205" y="622" width="6" height="1" fill="#8888B8"/>
<rect x="205" y="625" width="6" height="1" fill="#8888B8"/>
<rect x="204" y="622" width="1" height="1" fill="#E4E4EE"/>
<rect x="204" y="625" width="1" height="1" fill="#E4E4EE"/>
<rect x="241" y="622" width="6" height="1" fill="#8888B8"/>
<rect x="241" y="625" width="6" height="1" fill="#8888B8"/>
<rect x="240" y="622" width="1" height="1" fill="#E4E4EE"/>
<rect x="240" y="625" width="1" height="1" fill="#E4E4EE"/>
<rect x="277" y="622" width="6" height="1" fill="#8888B8"/>
<rect x="277" y="625" width="6" height="1" fill="#8888B8"/>
<rect x="276" y="622" width="1" height="1" fill="#E4E4EE"/>
<rect x="276" y="625" width="1" height="1" fill="#E4E4EE"/>
<rect x="313" y="622" width="6" height="1" fill="#8888B8"/>
<rect x="313" y="625" width="6" height="1" fill="#8888B8"/>
<rect x="312" y="622" width="1" height="1" fill="#E4E4EE"/>
<rect x="312" y="625" width="1" height="1" fill="#E4E4EE"/>
<rect x="349" y="622" width="6" height="1" fill="#8888B8"/>
<rect x="349" y="625" width="6" height="1" fill="#8888B8"/>
<rect x="348" y="622" width="1" height="1" fill="#E4E4EE"/>
<rect x="348" y="625" width="1" height="1" fill="#E4E4EE"/>
<rect x="385" y="622" width="6" height="1" fill="#8888B8"/>
<rect x="385" y="625" width="6" height="1" fill="#8888B8"/>
<rect x="384" y="622" width="1" height="1" fill="#E4E4EE"/>
<rect x="384" y="625" width="1" height="1" fill="#E4E4EE"/>
<rect x="421" y="622" width="6" height="1" fill="#8888B8"/>
<rect x="421" y="625" width="6" height="1" fill="#8888B8"/>
<rect x="420" y="622" width="1" height="1" fill="#E4E4EE"/>
<rect x="420" y="625" width="1" height="1" fill="#E4E4EE"/>
<rect x="457" y="622" width="6" height="1" fill="#8888B8"/>
<rect x="457" y="625" width="6" height="1" fill="#8888B8"/>
<rect x="456" y="622" width="1" height="1" fill="#E4E4EE"/>
<rect x="456" y="625" width="1" height="1" fill="#E4E4EE"/>
<rect x="493" y="622" width="6" height="1" fill="#8888B8"/>
<rect x="493" y="625" width="6" height="1" fill="#8888B8"/>
<rect x="492" y="622" width="1" height="1" fill="#E4E4EE"/>
<rect x="492" y="625" width="1" height="1" fill="#E4E4EE"/>
<rect x="529" y="622" width="6" height="1" fill="#8888B8"/>
<rect x="529" y="625" width="6" height="1" fill="#8888B8"/>
<rect x="528" y="622" width="1" height="1" fill="#E4E4EE"/>
<rect x="528" y="625" width="1" height="1" fill="#E4E4EE"/>
<rect x="565" y="622" width="6" height="1" fill="#8888B8"/>
<rect x="565" y="625" width="6" height="1" fill="#8888B8"/>
<rect x="564" y="622" width="1" height="1" fill="#E4E4EE"/>
<rect x="564" y="625" width="1" height="1" fill="#E4E4EE"/>
<rect x="601" y="622" width="6" height="1" fill="#8888B8"/>
<rect x="601" y="625" width="6" height="1" fill="#8888B8"/>
<rect x="600" y="622" width="1" height="1" fill="#E4E4EE"/>
<rect x="600" y="625" width="1" height="1" fill="#E4E4EE"/>
<rect x="637" y="622" width="6" height="1" fill="#8888B8"/>
<rect x="637" y="625" width="6" height="1" fill="#8888B8"/>
<rect x="636" y="622" width="1" height="1" fill="#E4E4EE"/>
<rect x="636" y="625" width="1" height="1" fill="#E4E4EE"/>
<rect x="673" y="622" width="6" height="1" fill="#8888B8"/>
<rect x="673" y="625" width="6" height="1" fill="#8888B8"/>
<rect x="672" y="622" width="1" height="1" fill="#E4E4EE"/>
<rect x="672" y="625" width="1" height="1" fill="#E4E4EE"/>
<rect x="709" y="622" width="6" height="1" fill="#8888B8"/>
<rect x="709" y="625" width="6" height="1" fill="#8888B8"/>
<rect x="708" y="622" width="1" height="1" fill="#E4E4EE"/>
<rect x="708" y="625" width="1" height="1" fill="#E4E4EE"/>
<rect x="745" y="622" width="6" height="1" fill="#8888B8"/>
<rect x="745" y="625" width="6" height="1" fill="#8888B8"/>
<rect x="744" y="622" width="1" height="1" fill="#E4E4EE"/>
<rect x="744" y="625" width="1" height="1" fill="#E4E4EE"/>
<rect x="781" y="622" width="6" height="1" fill="#8888B8"/>
<rect x="781" y="625" width="6" height="1" fill="#8888B8"/>
<rect x="780" y="622" width="1" height="1" fill="#E4E4EE"/>
<rect x="780" y="625" width="1" height="1" fill="#E4E4EE"/>
<rect x="817" y="622" width="6" height="1" fill="#8888B8"/>
<rect x="817" y="625" width="6" height="1" fill="#8888B8"/>
<rect x="816" y="622" width="1" height="1" fill="#E4E4EE"/>
<rect x="816" y="625" width="1" height="1" fill="#E4E4EE"/>
<rect x="853" y="622" width="6" height="1" fill="#8888B8"/>
<rect x="853" y="625" width="6" height="1" fill="#8888B8"/>
<rect x="852" y="622" width="1" height="1" fill="#E4E4EE"/>
<rect x="852" y="625" width="1" height="1" fill="#E4E4EE"/>
<rect x="889" y="622" width="6" height="1" fill="#8888B8"/>
<rect x="889" y="625" width="6" height="1" fill="#8888B8"/>
<rect x="888" y="622" width="1" height="1" fill="#E4E4EE"/>
<rect x="888" y="625" width="1" height="1" fill="#E4E4EE"/>
<rect x="925" y="622" width="6" height="1" fill="#8888B8"/>
<rect x="925" y="625" width="6" height="1" fill="#8888B8"/>
<rect x="924" y="622" width="1" height="1" fill="#E4E4EE"/>
<rect x="924" y="625" width="1" height="1" fill="#E4E4EE"/>
<rect x="169" y="637" width="6" height="1" fill="#8888B8"/>
<rect x="169" y="640" width="6" height="1" fill="#8888B8"/>
<rect x="168" y="637" width="1" height="1" fill="#E4E4EE"/>
<rect x="168" y="640" width="1" height="1" fill="#E4E4EE"/>
<rect x="205" y="637" width="6" height="1" fill="#8888B8"/>
<rect x="205" y="640" width="6" height="1" fill="#8888B8"/>
<rect x="204" y="637" width="1" height="1" fill="#E4E4EE"/>
<rect x="204" y="640" width="1" height="1" fill="#E4E4EE"/>
<rect x="241" y="637" width="6" height="1" fill="#8888B8"/>
<rect x="241" y="640" width="6" height="1" fill="#8888B8"/>
<rect x="240" y="637" width="1" height="1" fill="#E4E4EE"/>
<rect x="240" y="640" width="1" height="1" fill="#E4E4EE"/>
<rect x="277" y="637" width="6" height="1" fill="#8888B8"/>
<rect x="277" y="640" width="6" height="1" fill="#8888B8"/>
<rect x="276" y="637" width="1" height="1" fill="#E4E4EE"/>
<rect x="276" y="640" width="1" height="1" fill="#E4E4EE"/>
<rect x="313" y="637" width="6" height="1" fill="#8888B8"/>
<rect x="313" y="640" width="6" height="1" fill="#8888B8"/>
<rect x="312" y="637" width="1" height="1" fill="#E4E4EE"/>
<rect x="312" y="640" width="1" height="1" fill="#E4E4EE"/>
<rect x="349" y="637" width="6" height="1" fill="#8888B8"/>
<rect x="349" y="640" width="6" height="1" fill="#8888B8"/>
<rect x="348" y="637" width="1" height="1" fill="#E4E4EE"/>
<rect x="348" y="640" width="1" height="1" fill="#E4E4EE"/>
<rect x="385" y="637" width="6" height="1" fill="#8888B8"/>
<rect x="385" y="640" width="6" height="1" fill="#8888B8"/>
<rect x="384" y="637" width="1" height="1" fill="#E4E4EE"/>
<rect x="384" y="640" width="1" height="1" fill="#E4E4EE"/>
<rect x="421" y="637" width="6" height="1" fill="#8888B8"/>
<rect x="421" y="640" width="6" height="1" fill="#8888B8"/>
<rect x="420" y="637" width="1" height="1" fill="#E4E4EE"/>
<rect x="420" y="640" width="1" height="1" fill="#E4E4EE"/>
<rect x="457" y="637" width="6" height="1" fill="#8888B8"/>
<rect x="457" y="640" width="6" height="1" fill="#8888B8"/>
<rect x="456" y="637" width="1" height="1" fill="#E4E4EE"/>
<rect x="456" y="640" width="1" height="1" fill="#E4E4EE"/>
<rect x="493" y="637" width="6" height="1" fill="#8888B8"/>
<rect x="493" y="640" width="6" height="1" fill="#8888B8"/>
<rect x="492" y="637" width="1" height="1" fill="#E4E4EE"/>
<rect x="492" y="640" width="1" height="1" fill="#E4E4EE"/>
<rect x="529" y="637" width="6" height="1" fill="#8888B8"/>
<rect x="529" y="640" width="6" height="1" fill="#8888B8"/>
<rect x="528" y="637" width="1" height="1" fill="#E4E4EE"/>
<rect x="528" y="640" width="1" height="1" fill="#E4E4EE"/>
<rect x="565" y="637" width="6" height="1" fill="#8888B8"/>
<rect x="565" y="640" width="6" height="1" fill="#8888B8"/>
<rect x="564" y="637" width="1" height="1" fill="#E4E4EE"/>
<rect x="564" y="640" width="1" height="1" fill="#E4E4EE"/>
<rect x="601" y="637" width="6" height="1" fill="#8888B8"/>
<rect x="601" y="640" width="6" height="1" fill="#8888B8"/>
<rect x="600" y="637" width="1" height="1" fill="#E4E4EE"/>
<rect x="600" y="640" width="1" height="1" fill="#E4E4EE"/>
<rect x="637" y="637" width="6" height="1" fill="#8888B8"/>
<rect x="637" y="640" width="6" height="1" fill="#8888B8"/>
<rect x="636" y="637" width="1" height="1" fill="#E4E4EE"/>
<rect x="636" y="640" width="1" height="1" fill="#E4E4EE"/>
<rect x="673" y="637" width="6" height="1" fill="#8888B8"/>
<rect x="673" y="640" width="6" height="1" fill="#8888B8"/>
<rect x="672" y="637" width="1" height="1" fill="#E4E4EE"/>
<rect x="672" y="640" width="1" height="1" fill="#E4E4EE"/>
<rect x="709" y="637" width="6" height="1" fill="#8888B8"/>
<rect x="709" y="640" width="6" height="1" fill="#8888B8"/>
<rect x="708" y="637" width="1" height="1" fill="#E4E4EE"/>
<rect x="708" y="640" width="1" height="1" fill="#E4E4EE"/>
<rect x="745" y="637" width="6" height="1" fill="#8888B8"/>
<rect x="745" y="640" width="6" height="1" fill="#8888B8"/>
<rect x="744" y="637" width="1" height="1" fill="#E4E4EE"/>
<rect x="744" y="640" width="1" height="1" fill="#E4E4EE"/>
<rect x="781" y="637" width="6" height="1" fill="#8888B8"/>
<rect x="781" y="640" width="6" height="1" fill="#8888B8"/>
<rect x="780" y="637" width="1" height="1" fill="#E4E4EE"/>
<rect x="780" y="640" width="1" height="1" fill="#E4E4EE"/>
<rect x="817" y="637" width="6" height="1" fill="#8888B8"/>
<rect x="817" y="640" width="6" height="1" fill="#8888B8"/>
<rect x="816" y="637" width="1" height="1" fill="#E4E4EE"/>
<rect x="816" y="640" width="1" height="1" fill="#E4E4EE"/>
<rect x="853" y="637" width="6" height="1" fill="#8888B8"/>
<rect x="853" y="640" width="6" height="1" fill="#8888B8"/>
<rect x="852" y="637" width="1" height="1" fill="#E4E4EE"/>
<rect x="852" y="640" width="1" height="1" fill="#E4E4EE"/>
<rect x="889" y="637" width="6" height="1" fill="#8888B8"/>
<rect x="889" y="640" width="6" height="1" fill="#8888B8"/>
<rect x="888" y="637" width="1" height="1" fill="#E4E4EE"/>
<rect x="888" y="640" width="1" height="1" fill="#E4E4EE"/>
<rect x="925" y="637" width="6" height="1" fill="#8888B8"/>
<rect x="925" y="640" width="6" height="1" fill="#8888B8"/>
<rect x="924" y="637" width="1" height="1" fill="#E4E4EE"/>
<rect x="924" y="640" width="1" height="1" fill="#E4E4EE"/>
<rect x="169" y="652" width="6" height="1" fill="#8888B8"/>
<rect x="169" y="655" width="6" height="1" fill="#8888B8"/>
<rect x="168" y="652" width="1" height="1" fill="#E4E4EE"/>
<rect x="168" y="655" width="1" height="1" fill="#E4E4EE"/>
<rect x="205" y="652" width="6" height="1" fill="#8888B8"/>
<rect x="205" y="655" width="6" height="1" fill="#8888B8"/>
<rect x="204" y="652" width="1" height="1" fill="#E4E4EE"/>
<rect x="204" y="655" width="1" height="1" fill="#E4E4EE"/>
<rect x="241" y="652" width="6" height="1" fill="#8888B8"/>
<rect x="241" y="655" width="6" height="1" fill="#8888B8"/>
<rect x="240" y="652" width="1" height="1" fill="#E4E4EE"/>
<rect x="240" y="655" width="1" height="1" fill="#E4E4EE"/>
<rect x="277" y="652" width="6" height="1" fill="#8888B8"/>
<rect x="277" y="655" width="6" height="1" fill="#8888B8"/>
<rect x="276" y="652" width="1" height="1" fill="#E4E4EE"/>
<rect x="276" y="655" width="1" height="1" fill="#E4E4EE"/>
<rect x="313" y="652" width="6" height="1" fill="#8888B8"/>
<rect x="313" y="655" width="6" height="1" fill="#8888B8"/>
<rect x="312" y="652" width="1" height="1" fill="#E4E4EE"/>
<rect x="312" y="655" width="1" height="1" fill="#E4E4EE"/>
<rect x="349" y="652" width="6" height="1" fill="#8888B8"/>
<rect x="349" y="655" width="6" height="1" fill="#8888B8"/>
<rect x="348" y="652" width="1" height="1" fill="#E4E4EE"/>
<rect x="348" y="655" width="1" height="1" fill="#E4E4EE"/>
<rect x="385" y="652" width="6" height="1" fill="#8888B8"/>
<rect x="385" y="655" width="6" height="1" fill="#8888B8"/>
<rect x="384" y="652" width="1" height="1" fill="#E4E4EE"/>
<rect x="384" y="655" width="1" height="1" fill="#E4E4EE"/>
<rect x="421" y="652" width="6" height="1" fill="#8888B8"/>
<rect x="421" y="655" width="6" height="1" fill="#8888B8"/>
<rect x="420" y="652" width="1" height="1" fill="#E4E4EE"/>
<rect x="420" y="655" width="1" height="1" fill="#E4E4EE"/>
<rect x="457" y="652" width="6" height="1" fill="#8888B8"/>
<rect x="457" y="655" width="6" height="1" fill="#8888B8"/>
<rect x="456" y="652" width="1" height="1" fill="#E4E4EE"/>
<rect x="456" y="655" width="1" height="1" fill="#E4E4EE"/>
<rect x="493" y="652" width="6" height="1" fill="#8888B8"/>
<rect x="493" y="655" width="6" height="1" fill="#8888B8"/>
<rect x="492" y="652" width="1" height="1" fill="#E4E4EE"/>
<rect x="492" y="655" width="1" height="1" fill="#E4E4EE"/>
<rect x="529" y="652" width="6" height="1" fill="#8888B8"/>
<rect x="529" y="655" width="6" height="1" fill="#8888B8"/>
<rect x="528" y="652" width="1" height="1" fill="#E4E4EE"/>
<rect x="528" y="655" width="1" height="1" fill="#E4E4EE"/>
<rect x="565" y="652" width="6" height="1" fill="#8888B8"/>
<rect x="565" y="655" width="6" height="1" fill="#8888B8"/>
<rect x="564" y="652" width="1" height="1" fill="#E4E4EE"/>
<rect x="564" y="655" width="1" height="1" fill="#E4E4EE"/>
<rect x="601" y="652" width="6" height="1" fill="#8888B8"/>
<rect x="601" y="655" width="6" height="1" fill="#8888B8"/>
<rect x="600" y="652" width="1" height="1" fill="#E4E4EE"/>
<rect x="600" y="655" width="1" height="1" fill="#E4E4EE"/>
<rect x="637" y="652" width="6" height="1" fill="#8888B8"/>
<rect x="637" y="655" width="6" height="1" fill="#8888B8"/>
<rect x="636" y="652" width="1" height="1" fill="#E4E4EE"/>
<rect x="636" y="655" width="1" height="1" fill="#E4E4EE"/>
<rect x="673" y="652" width="6" height="1" fill="#8888B8"/>
<rect x="673" y="655" width="6" height="1" fill="#8888B8"/>
<rect x="672" y="652" width="1" height="1" fill="#E4E4EE"/>
<rect x="672" y="655" width="1" height="1" fill="#E4E4EE"/>
<rect x="709" y="652" width="6" height="1" fill="#8888B8"/>
<rect x="709" y="655" width="6" height="1" fill="#8888B8"/>
<rect x="708" y="652" width="1" height="1" fill="#E4E4EE"/>
<rect x="708" y="655" width="1" height="1" fill="#E4E4EE"/>
<rect x="745" y="652" width="6" height="1" fill="#8888B8"/>
<rect x="745" y="655" width="6" height="1" fill="#8888B8"/>
<rect x="744" y="652" width="1" height="1" fill="#E4E4EE"/>
<rect x="744" y="655" width="1" height="1" fill="#E4E4EE"/>
<rect x="781" y="652" width="6" height="1" fill="#8888B8"/>
<rect x="781" y="655" width="6" height="1" fill="#8888B8"/>
<rect x="780" y="652" width="1" height="1" fill="#E4E4EE"/>
<rect x="780" y="655" width="1" height="1" fill="#E4E4EE"/>
<rect x="817" y="652" width="6" height="1" fill="#8888B8"/>
<rect x="817" y="655" width="6" height="1" fill="#8888B8"/>
<rect x="816" y="652" width="1" height="1" fill="#E4E4EE"/>
<rect x="816" y="655" width="1" height="1" fill="#E4E4EE"/>
<rect x="853" y="652" width="6" height="1" fill="#8888B8"/>
<rect x="853" y="655" width="6" height="1" fill="#8888B8"/>
<rect x="852" y="652" width="1" height="1" fill="#E4E4EE"/>
<rect x="852" y="655" width="1" height="1" fill="#E4E4EE"/>
<rect x="889" y="652" width="6" height="1" fill="#8888B8"/>
<rect x="889" y="655" width="6" height="1" fill="#8888B8"/>
<rect x="888" y="652" width="1" height="1" fill="#E4E4EE"/>
<rect x="888" y="655" width="1" height="1" fill="#E4E4EE"/>
<rect x="925" y="652" width="6" height="1" fill="#8888B8"/>
<rect x="925" y="655" width="6" height="1" fill="#8888B8"/>
<rect x="924" y="652" width="1" height="1" fill="#E4E4EE"/>
<rect x="924" y="655" width="1" height="1" fill="#E4E4EE"/>
<rect x="169" y="667" width="6" height="1" fill="#8888B8"/>
<rect x="169" y="670" width="6" height="1" fill="#8888B8"/>
<rect x="168" y="667" width="1" height="1" fill="#E4E4EE"/>
<rect x="168" y="670" width="1" height="1" fill="#E4E4EE"/>
<rect x="205" y="667" width="6" height="1" fill="#8888B8"/>
<rect x="205" y="670" width="6" height="1" fill="#8888B8"/>
<rect x="204" y="667" width="1" height="1" fill="#E4E4EE"/>
<rect x="204" y="670" width="1" height="1" fill="#E4E4EE"/>
<rect x="241" y="667" width="6" height="1" fill="#8888B8"/>
<rect x="241" y="670" width="6" height="1" fill="#8888B8"/>
<rect x="240" y="667" width="1" height="1" fill="#E4E4EE"/>
<rect x="240" y="670" width="1" height="1" fill="#E4E4EE"/>
<rect x="277" y="667" width="6" height="1" fill="#8888B8"/>
<rect x="277" y="670" width="6" height="1" fill="#8888B8"/>
<rect x="276" y="667" width="1" height="1" fill="#E4E4EE"/>
<rect x="276" y="670" width="1" height="1" fill="#E4E4EE"/>
<rect x="313" y="667" width="6" height="1" fill="#8888B8"/>
<rect x="313" y="670" width="6" height="1" fill="#8888B8"/>
<rect x="312" y="667" width="1" height="1" fill="#E4E4EE"/>
<rect x="312" y="670" width="1" height="1" fill="#E4E4EE"/>
<rect x="349" y="667" width="6" height="1" fill="#8888B8"/>
<rect x="349" y="670" width="6" height="1" fill="#8888B8"/>
<rect x="348" y="667" width="1" height="1" fill="#E4E4EE"/>
<rect x="348" y="670" width="1" height="1" fill="#E4E4EE"/>
<rect x="385" y="667" width="6" height="1" fill="#8888B8"/>
<rect x="385" y="670" width="6" height="1" fill="#8888B8"/>
<rect x="384" y="667" width="1" height="1" fill="#E4E4EE"/>
<rect x="384" y="670" width="1" height="1" fill="#E4E4EE"/>
<rect x="421" y="667" width="6" height="1" fill="#8888B8"/>
<rect x="421" y="670" width="6" height="1" fill="#8888B8"/>
<rect x="420" y="667" width="1" height="1" fill="#E4E4EE"/>
<rect x="420" y="670" width="1" height="1" fill="#E4E4EE"/>
<rect x="457" y="667" width="6" height="1" fill="#8888B8"/>
<rect x="457" y="670" width="6" height="1" fill="#8888B8"/>
<rect x="456" y="667" width="1" height="1" fill="#E4E4EE"/>
<rect x="456" y="670" width="1" height="1" fill="#E4E4EE"/>
<rect x="493" y="667" width="6" height="1" fill="#8888B8"/>
<rect x="493" y="670" width="6" height="1" fill="#8888B8"/>
<rect x="492" y="667" width="1" height="1" fill="#E4E4EE"/>
<rect x="492" y="670" width="1" height="1" fill="#E4E4EE"/>
<rect x="529" y="667" width="6" height="1" fill="#8888B8"/>
<rect x="529" y="670" width="6" height="1" fill="#8888B8"/>
<rect x="528" y="667" width="1" height="1" fill="#E4E4EE"/>
<rect x="528" y="670" width="1" height="1" fill="#E4E4EE"/>
<rect x="565" y="667" width="6" height="1" fill="#8888B8"/>
<rect x="565" y="670" width="6" height="1" fill="#8888B8"/>
<rect x="564" y="667" width="1" height="1" fill="#E4E4EE"/>
<rect x="564" y="670" width="1" height="1" fill="#E4E4EE"/>
<rect x="601" y="667" width="6" height="1" fill="#8888B8"/>
<rect x="601" y="670" width="6" height="1" fill="#8888B8"/>
<rect x="600" y="667" width="1" height="1" fill="#E4E4EE"/>
<rect x="600" y="670" width="1" height="1" fill="#E4E4EE"/>
<rect x="637" y="667" width="6" height="1" fill="#8888B8"/>
<rect x="637" y="670" width="6" height="1" fill="#8888B8"/>
<rect x="636" y="667" width="1" height="1" fill="#E4E4EE"/>
<rect x="636" y="670" width="1" height="1" fill="#E4E4EE"/>
<rect x="673" y="667" width="6" height="1" fill="#8888B8"/>
<rect x="673" y="670" width="6" height="1" fill="#8888B8"/>
<rect x="672" y="667" width="1" height="1" fill="#E4E4EE"/>
<rect x="672" y="670" width="1" height="1" fill="#E4E4EE"/>
<rect x="709" y="667" width="6" height="1" fill="#8888B8"/>
<rect x="709" y="670" width="6" height="1" fill="#8888B8"/>
<rect x="708" y="667" width="1" height="1" fill="#E4E4EE"/>
<rect x="708" y="670" width="1" height="1" fill="#E4E4EE"/>
<rect x="745" y="667" width="6" height="1" fill="#8888B8"/>
<rect x="745" y="670" width="6" height="1" fill="#8888B8"/>
<rect x="744" y="667" width="1" height="1" fill="#E4E4EE"/>
<rect x="744" y="670" width="1" height="1" fill="#E4E4EE"/>
<rect x="781" y="667" width="6" height="1" fill="#8888B8"/>
<rect x="781" y="670" width="6" height="1" fill="#8888B8"/>
<rect x="780" y="667" width="1" height="1" fill="#E4E4EE"/>
<rect x="780" y="670" width="1" height="1" fill="#E4E4EE"/>
<rect x="817" y="667" width="6" height="1" fill="#8888B8"/>
<rect x="817" y="670" width="6" height="1" fill="#8888B8"/>
<rect x="816" y="667" width="1" height="1" fill="#E4E4EE"/>
<rect x="816" y="670" width="1" height="1" fill="#E4E4EE"/>
<rect x="853" y="667" width="6" height="1" fill="#8888B8"/>
<rect x="853" y="670" width="6" height="1" fill="#8888B8"/>
<rect x="852" y="667" width="1" height="1" fill="#E4E4EE"/>
<rect x="852" y="670" width="1" height="1" fill="#E4E4EE"/>
<rect x="889" y="667" width="6" height="1" fill="#8888B8"/>
<rect x="889" y="670" width="6" height="1" fill="#8888B8"/>
<rect x="888" y="667" width="1" height="1" fill="#E4E4EE"/>
<rect x="888" y="670" width="1" height="1" fill="#E4E4EE"/>
<rect x="925" y="667" width="6" height="1" fill="#8888B8"/>
<rect x="925" y="670" width="6" height="1" fill="#8888B8"/>
<rect x="924" y="667" width="1" height="1" fill="#E4E4EE"/>
<rect x="924" y="670" width="1" height="1" fill="#E4E4EE"/>
<rect x="169" y="682" width="6" height="1" fill="#8888B8"/>
<rect x="169" y="685" width="6" height="1" fill="#8888B8"/>
<rect x="168" y="682" width="1" height="1" fill="#E4E4EE"/>
<rect x="168" y="685" width="1" height="1" fill="#E4E4EE"/>
<rect x="205" y="682" width="6" height="1" fill="#8888B8"/>
<rect x="205" y="685" width="6" height="1" fill="#8888B8"/>
<rect x="204" y="682" width="1" height="1" fill="#E4E4EE"/>
<rect x="204" y="685" width="1" height="1" fill="#E4E4EE"/>
<rect x="241" y="682" width="6" height="1" fill="#8888B8"/>
<rect x="241" y="685" width="6" height="1" fill="#8888B8"/>
<rect x="240" y="682" width="1" height="1" fill="#E4E4EE"/>
<rect x="240" y="685" width="1" height="1" fill="#E4E4EE"/>
<rect x="277" y="682" width="6" height="1" fill="#8888B8"/>
<rect x="277" y="685" width="6" height="1" fill="#8888B8"/>
<rect x="276" y="682" width="1" height="1" fill="#E4E4EE"/>
<rect x="276" y="685" width="1" height="1" fill="#E4E4EE"/>
<rect x="313" y="682" width="6" height="1" fill="#8888B8"/>
<rect x="313" y="685" width="6" height="1" fill="#8888B8"/>
<rect x="312" y="682" width="1" height="1" fill="#E4E4EE"/>
<rect x="312" y="685" width="1" height="1" fill="#E4E4EE"/>
<rect x="349" y="682" width="6" height="1" fill="#8888B8"/>
<rect x="349" y="685" width="6" height="1" fill="#8888B8"/>
<rect x="348" y="682" width="1" height="1" fill="#E4E4EE"/>
<rect x="348" y="685" width="1" height="1" fill="#E4E4EE"/>
<rect x="385" y="682" width="6" height="1" fill="#8888B8"/>
<rect x="385" y="685" width="6" height="1" fill="#8888B8"/>
<rect x="384" y="682" width="1" height="1" fill="#E4E4EE"/>
<rect x="384" y="685" width="1" height="1" fill="#E4E4EE"/>
<rect x="421" y="682" width="6" height="1" fill="#8888B8"/>
<rect x="421" y="685" width="6" height="1" fill="#8888B8"/>
<rect x="420" y="682" width="1" height="1" fill="#E4E4EE"/>
<rect x="420" y="685" width="1" height="1" fill="#E4E4EE"/>
<rect x="457" y="682" width="6" height="1" fill="#8888B8"/>
<rect x="457" y="685" width="6" height="1" fill="#8888B8"/>
<rect x="456" y="682" width="1" height="1" fill="#E4E4EE"/>
<rect x="456" y="685" width="1" height="1" fill="#E4E4EE"/>
<rect x="493" y="682" width="6" height="1" fill="#8888B8"/>
<rect x="493" y="685" width="6" height="1" fill="#8888B8"/>
<rect x="492" y="682" width="1" height="1" fill="#E4E4EE"/>
<rect x="492" y="685" width="1" height="1" fill="#E4E4EE"/>
<rect x="529" y="682" width="6" height="1" fill="#8888B8"/>
<rect x="529" y="685" width="6" height="1" fill="#8888B8"/>
<rect x="528" y="682" width="1" height="1" fill="#E4E4EE"/>
<rect x="528" y="685" width="1" height="1" fill="#E4E4EE"/>
<rect x="565" y="682" width="6" height="1" fill="#8888B8"/>
<rect x="565" y="685" width="6" height="1" fill="#8888B8"/>
<rect x="564" y="682" width="1" height="1" fill="#E4E4EE"/>
<rect x="564" y="685" width="1" height="1" fill="#E4E4EE"/>
<rect x="601" y="682" width="6" height="1" fill="#8888B8"/>
<rect x="601" y="685" width="6" height="1" fill="#8888B8"/>
<rect x="600" y="682" width="1" height="1" fill="#E4E4EE"/>
<rect x="600" y="685" width="1" height="1" fill="#E4E4EE"/>
<rect x="637" y="682" width="6" height="1" fill="#8888B8"/>
<rect x="637" y="685" width="6" height="1" fill="#8888B8"/>
<rect x="636" y="682" width="1" height="1" fill="#E4E4EE"/>
<rect x="636" y="685" width="1" height="1" fill="#E4E4EE"/>
<rect x="673" y="682" width="6" height="1" fill="#8888B8"/>
<rect x="673" y="685" width="6" height="1" fill="#8888B8"/>
<rect x="672" y="682" width="1" height="1" fill="#E4E4EE"/>
<rect x="672" y="685" width="1" height="1" fill="#E4E4EE"/>
<rect x="709" y="682" width="6" height="1" fill="#8888B8"/>
<rect x="709" y="685" width="6" height="1" fill="#8888B8"/>
<rect x="708" y="682" width="1" height="1" fill="#E4E4EE"/>
<rect x="708" y="685" width="1" height="1" fill="#E4E4EE"/>
<rect x="745" y="682" width="6" height="1" fill="#8888B8"/>
<rect x="745" y="685" width="6" height="1" fill="#8888B8"/>
<rect x="744" y="682" width="1" height="1" fill="#E4E4EE"/>
<rect x="744" y="685" width="1" height="1" fill="#E4E4EE"/>
<rect x="781" y="682" width="6" height="1" fill="#8888B8"/>
<rect x="781" y="685" width="6" height="1" fill="#8888B8"/>
<rect x="780" y="682" width="1" height="1" fill="#E4E4EE"/>
<rect x="780" y="685" width="1" height="1" fill="#E4E4EE"/>
<rect x="817" y="682" width="6" height="1" fill="#8888B8"/>
<rect x="817" y="685" width="6" height="1" fill="#8888B8"/>
<rect x="816" y="682" width="1" height="1" fill="#E4E4EE"/>
<rect x="816" y="685" width="1" height="1" fill="#E4E4EE"/>
<rect x="853" y="682" width="6" height="1" fill="#8888B8"/>
<rect x="853" y="685" width="6" height="1" fill="#8888B8"/>
<rect x="852" y="682" width="1" height="1" fill="#E4E4EE"/>
<rect x="852" y="685" width="1" height="1" fill="#E4E4EE"/>
<rect x="889" y="682" width="6" height="1" fill="#8888B8"/>
<rect x="889" y="685" width="6" height="1" fill="#8888B8"/>
<rect x="888" y="682" width="1" height="1" fill="#E4E4EE"/>
<rect x="888" y="685" width="1" height="1" fill="#E4E4EE"/>
<rect x="925" y="682" width="6" height="1" fill="#8888B8"/>
<rect x="925" y="685" width="6" height="1" fill="#8888B8"/>
<rect x="924" y="682" width="1" height="1" fill="#E4E4EE"/>
<rect x="924" y="685" width="1" height="1" fill="#E4E4EE"/>
<text x="441 450 457 464 471 478 482 485 492 499 503 512 515 522 533 540 547 551 558 562 569 576 580 589 596 603 610 617 621 632 639 646 653 660" y="0" transform="translate(0,703) scale(1,1.06)" fill="#000" font-size="13">Repeating Elements by RepeatMasker</text>
<rect x="156" y="705" width="794" height="15" fill="#000"/>
</svg></body></html>
